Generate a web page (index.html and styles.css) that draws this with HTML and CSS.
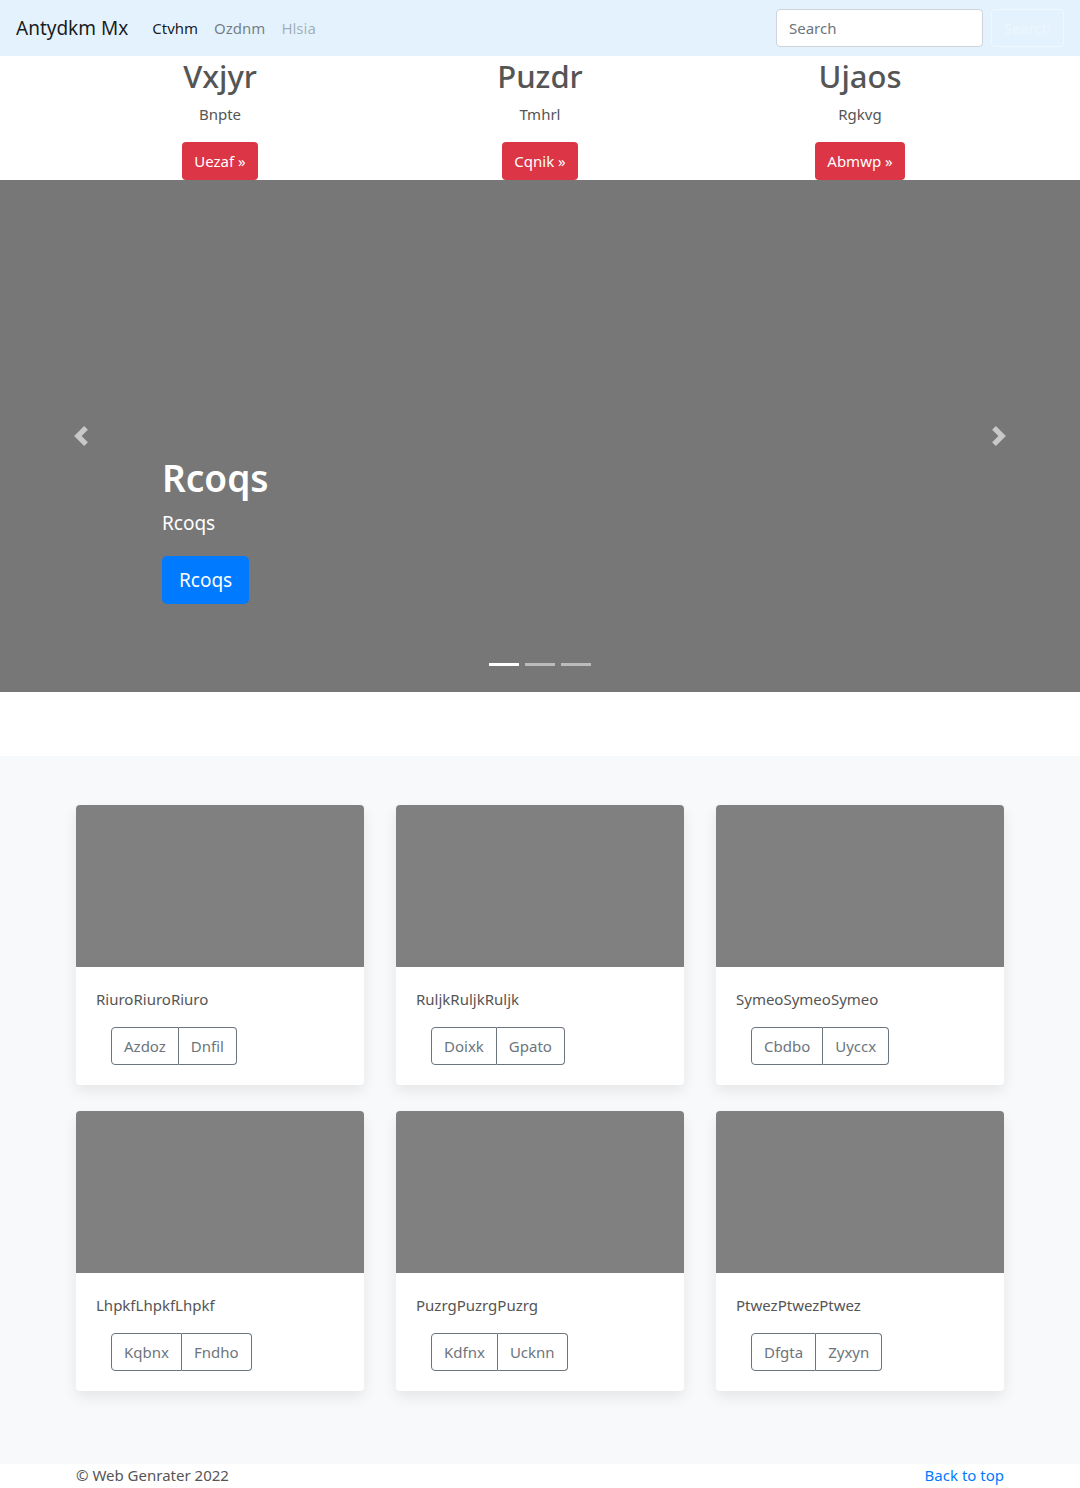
FILE: index.html
```html
<!DOCTYPE html>
<html lang="en">
<head>
<meta charset="utf-8">
<title>Antydkm Mx</title>
<link rel="stylesheet" href="styles.css">
</head>
<body>
<header class="navbar">
  <a class="brand" href="#">Antydkm Mx</a>
  <nav class="nav">
    <a class="nav-link active" href="#">Ctvhm</a>
    <a class="nav-link" href="#">Ozdnm</a>
    <a class="nav-link disabled" href="#">Hlsia</a>
  </nav>
  <form class="search">
    <input class="search-input" type="text" placeholder="Search">
    <button class="search-btn" type="button">Search</button>
  </form>
</header>

<section class="features">
  <div class="feature">
    <h2 class="feature-title">Vxjyr</h2>
    <p class="feature-text">Bnpte</p>
    <a class="btn btn-red" href="#">Uezaf »</a>
  </div>
  <div class="feature">
    <h2 class="feature-title">Puzdr</h2>
    <p class="feature-text">Tmhrl</p>
    <a class="btn btn-red" href="#">Cqnik »</a>
  </div>
  <div class="feature">
    <h2 class="feature-title">Ujaos</h2>
    <p class="feature-text">Rgkvg</p>
    <a class="btn btn-red" href="#">Abmwp »</a>
  </div>
</section>

<section class="carousel">
  <div class="caption">
    <h1 class="caption-title">Rcoqs</h1>
    <p class="caption-text">Rcoqs</p>
    <a class="btn btn-blue" href="#">Rcoqs</a>
  </div>
  <a class="ctrl ctrl-prev" href="#"><svg width="20" height="20" viewBox="0 0 8 8"><path fill="#c8c8c8" d="M5.25 0l-4 4 4 4 1.5-1.5-2.5-2.5 2.5-2.5-1.5-1.5z"/></svg></a>
  <a class="ctrl ctrl-next" href="#"><svg width="20" height="20" viewBox="0 0 8 8"><path fill="#c8c8c8" d="M2.75 0l-1.5 1.5 2.5 2.5-2.5 2.5 1.5 1.5 4-4-4-4z"/></svg></a>
  <ol class="indicators">
    <li class="ind active"></li>
    <li class="ind"></li>
    <li class="ind"></li>
  </ol>
</section>

<div class="spacer"></div>

<main class="album">
  <div class="grid">
    <div class="card">
      <div class="card-img"></div>
      <div class="card-body">
        <p class="card-text">RiuroRiuroRiuro</p>
        <div class="btn-group"><a class="gbtn" href="#">Azdoz</a><a class="gbtn" href="#">Dnfil</a></div>
      </div>
    </div>
    <div class="card">
      <div class="card-img"></div>
      <div class="card-body">
        <p class="card-text">RuljkRuljkRuljk</p>
        <div class="btn-group"><a class="gbtn" href="#">Doixk</a><a class="gbtn" href="#">Gpato</a></div>
      </div>
    </div>
    <div class="card">
      <div class="card-img"></div>
      <div class="card-body">
        <p class="card-text">SymeoSymeoSymeo</p>
        <div class="btn-group"><a class="gbtn" href="#">Cbdbo</a><a class="gbtn" href="#">Uyccx</a></div>
      </div>
    </div>
    <div class="card">
      <div class="card-img"></div>
      <div class="card-body">
        <p class="card-text">LhpkfLhpkfLhpkf</p>
        <div class="btn-group"><a class="gbtn" href="#">Kqbnx</a><a class="gbtn" href="#">Fndho</a></div>
      </div>
    </div>
    <div class="card">
      <div class="card-img"></div>
      <div class="card-body">
        <p class="card-text">PuzrgPuzrgPuzrg</p>
        <div class="btn-group"><a class="gbtn" href="#">Kdfnx</a><a class="gbtn" href="#">Ucknn</a></div>
      </div>
    </div>
    <div class="card">
      <div class="card-img"></div>
      <div class="card-body">
        <p class="card-text">PtwezPtwezPtwez</p>
        <div class="btn-group"><a class="gbtn" href="#">Dfgta</a><a class="gbtn" href="#">Zyxyn</a></div>
      </div>
    </div>
  </div>
</main>

<footer class="footer">
  <span class="copy">© Web Genrater 2022</span>
  <a class="top-link" href="#">Back to top</a>
</footer>
</body>
</html>
```

FILE: styles.css
```css
* { box-sizing: border-box; }
html, body { margin: 0; padding: 0; }
body {
  font-family: "Noto Sans", "Open Sans", sans-serif;
  font-size: 16px;
  line-height: 1.5;
  color: #212529;
  background: #fff;
}
a { text-decoration: none; }

.navbar {
  height: 56px;
  background: #e3f2fd;
  display: flex;
  align-items: center;
  padding: 0 16px;
}
.brand {
  font-size: 19px;
  color: rgba(0,0,0,.9);
  margin-right: 16px;
  line-height: 1.5;
}
.nav { display: flex; flex: 1; }
.nav-link {
  font-size: 15px;
  padding: 8px 8px;
  color: rgba(0,0,0,.5);
}
.nav-link.active { color: rgba(0,0,0,.9); }
.nav-link.disabled { color: rgba(0,0,0,.3); }
.search { display: flex; align-items: center; }
.search-input {
  width: 207px;
  height: 38px;
  border: 1px solid #ced4da;
  border-radius: 4px;
  padding: 6px 12px;
  font: inherit;
  font-size: 15px;
  color: #495057;
  background: #fff;
  margin-right: 8px;
}
.search-input::placeholder { color: #6c757d; }
.search-btn {
  width: 73px;
  height: 38px;
  border: 1px solid #f0f8fe;
  border-radius: 4px;
  background: transparent;
  color: #eef6fd;
  font: inherit;
  font-size: 15px;
}

.features {
  width: 960px;
  margin: 0 auto;
  display: grid;
  grid-template-columns: repeat(3, 1fr);
}
.feature {
  display: flex;
  flex-direction: column;
  align-items: center;
}
.feature-title {
  margin: 2px 0 0;
  font-size: 31px;
  font-weight: 500;
  line-height: 1.2;
  color: #555;
}
.feature-text {
  margin: 8px 0 16px;
  font-size: 15px;
  color: #555;
}
.btn {
  display: inline-block;
  border-radius: 4px;
  color: #fff;
}
.btn-red {
  background: #dc3545;
  font-size: 15px;
  height: 38px;
  line-height: 38px;
  padding: 0 12px;
}

.carousel {
  position: relative;
  height: 512px;
  background: #777;
  display: flex;
  flex-direction: column;
  justify-content: flex-end;
  padding: 0 162px 88px;
}
.caption { color: #fff; }
.caption-title {
  margin: 0;
  font-size: 37px;
  font-weight: 600;
  line-height: 1.2;
}
.caption-text {
  margin: 9px 0 18px;
  font-size: 19px;
}
.btn-blue {
  background: #007bff;
  font-size: 19px;
  height: 48px;
  line-height: 48px;
  padding: 0 17px;
  border-radius: 5px;
}
.ctrl {
  position: absolute;
  top: 0;
  bottom: 0;
  width: 162px;
  display: flex;
  align-items: center;
  justify-content: center;
}
.ctrl-prev { left: 0; }
.ctrl-next { right: 0; }
.indicators {
  position: absolute;
  left: 0;
  right: 0;
  bottom: 26px;
  margin: 0;
  padding: 0;
  list-style: none;
  display: flex;
  justify-content: center;
  gap: 6px;
}
.ind {
  width: 30px;
  height: 3px;
  background: rgba(255,255,255,.5);
}
.ind.active { background: #fff; }

.spacer { height: 64px; }

.album {
  background: #f8f9fa;
  padding: 49px 0 73px;
}
.grid {
  width: 928px;
  margin: 0 auto;
  display: grid;
  grid-template-columns: repeat(3, 288px);
  column-gap: 32px;
  row-gap: 26px;
}
.card {
  background: #fff;
  border-radius: 4px;
  overflow: hidden;
  box-shadow: 0 6px 14px rgba(0,0,0,.08);
  height: 280px;
}
.card-img {
  height: 162px;
  background: #808080;
}
.card-body {
  padding: 20px 20px;
}
.card-text {
  margin: 0 0 16px;
  font-size: 15px;
  color: #555;
  line-height: 24px;
}
.btn-group {
  display: inline-flex;
  margin-left: 15px;
}
.gbtn {
  height: 38px;
  line-height: 36px;
  padding: 0 12px;
  border: 1px solid #6c757d;
  color: #6c757d;
  font-size: 15px;
}
.gbtn:first-child { border-radius: 4px 0 0 4px; }
.gbtn + .gbtn { border-left: none; border-radius: 0 4px 4px 0; }

.footer {
  width: 928px;
  margin: 0 auto;
  display: flex;
  justify-content: space-between;
  align-items: center;
  height: 24px;
  font-size: 15px;
  color: #555;
}
.top-link { color: #007bff; }
```
